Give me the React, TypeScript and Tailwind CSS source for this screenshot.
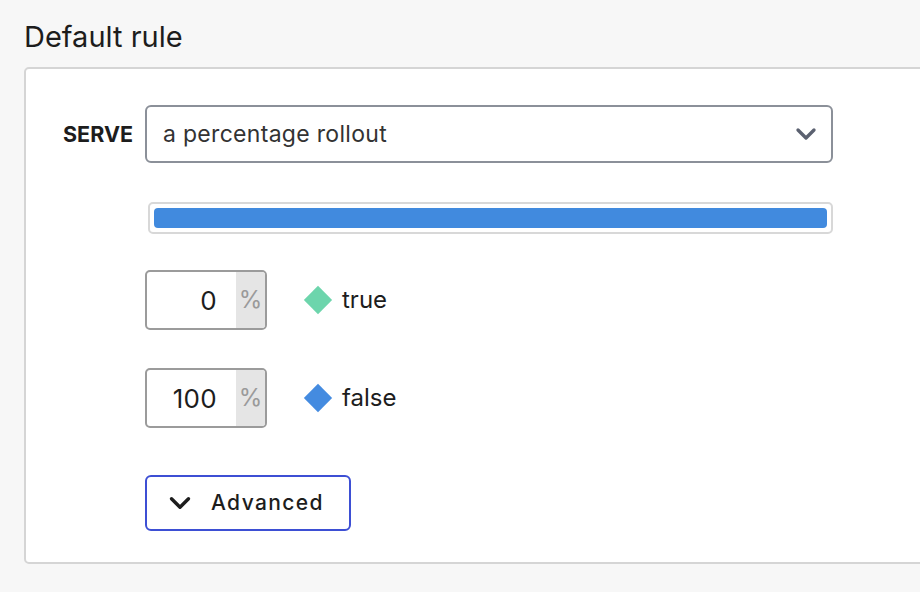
import { ChevronDown } from "lucide-react";

interface Variation {
  value: number;
  label: string;
  color: string;
}

const variations: Variation[] = [
  { value: 0, label: "true", color: "bg-[#6dd5ac]" },
  { value: 100, label: "false", color: "bg-[#448be0]" },
];

function PercentRow({ v }: { v: Variation }) {
  return (
    <div className="flex items-center">
      <div className="flex h-[60px] w-[122px] overflow-hidden rounded-[5px] border-2 border-[#9b9b9b] bg-white">
        <div className="flex flex-1 items-center justify-end pr-[19px] text-[26px] tracking-[0.3px] text-[#1d1d1d]">
          {v.value}
        </div>
        <div className="flex w-[29px] items-center justify-center bg-[#e5e5e5] text-[24px] text-[#9a9a9a]">
          %
        </div>
      </div>
      <span className={`ml-[41px] h-[20px] w-[20px] rotate-45 ${v.color}`} />
      <span className="ml-[14px] text-[24px] text-[#1d1d1d]">{v.label}</span>
    </div>
  );
}

export default function App() {
  return (
    <div className="h-[592px] w-[920px] overflow-hidden bg-[#f7f7f7] font-['Inter',sans-serif]">
      <h2 className="pl-6 pt-[17px] text-[29px] leading-[40px] text-[#1d1d1d]">
        Default rule
      </h2>
      <div className="ml-6 mt-[10px] w-[940px] rounded-[5px] border-2 border-[#d5d5d5] bg-white pb-[31px] pt-[36px]">
        <div className="flex items-start">
          <div className="flex h-[58px] w-[119px] items-center justify-end pr-[12px] text-[21.5px] font-bold text-[#1d1d1d]">
            SERVE
          </div>
          <div className="flex flex-col">
            <div className="flex h-[58px] w-[688px] items-center justify-between rounded-[6px] border-2 border-[#8b9099] pl-[16px] pr-[9px] text-[23px] tracking-[0.3px] text-[#333]">
              <span>a percentage rollout</span>
              <ChevronDown size={32} strokeWidth={2.5} className="text-[#5b6170]" />
            </div>
            <div className="ml-[3px] mt-[39px] h-[32px] w-[685px] rounded-[5px] border-2 border-[#d8d8d8] p-[4px]">
              <div className="h-full w-full rounded-[4px] bg-[#418ade]" />
            </div>
            <div className="mt-[36px] flex flex-col gap-[38px]">
              {variations.map((v) => (
                <PercentRow key={v.label} v={v} />
              ))}
            </div>
            <button className="mt-[47px] flex h-[56px] w-[206px] items-center rounded-[6px] border-2 border-[#3d4fd4] bg-white pl-[16px] text-[21px] font-medium tracking-[1.4px] text-[#1d1d1d]">
              <ChevronDown size={34} strokeWidth={2.4} />
              <span className="ml-[14px]">Advanced</span>
            </button>
          </div>
        </div>
      </div>
    </div>
  );
}
